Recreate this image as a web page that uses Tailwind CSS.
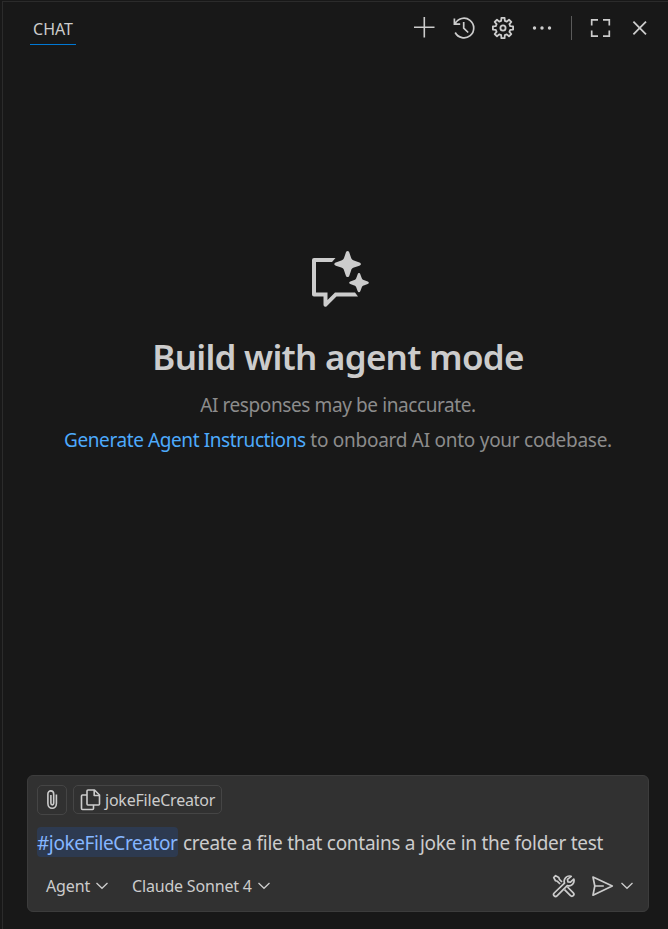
<!DOCTYPE html>
<html lang="en">
<head>
<meta charset="utf-8">
<title>Chat</title>
<script src="https://cdn.jsdelivr.net/npm/@tailwindcss/browser@4"></script>
</head>
<body class="bg-[#181818]">
<main class="flex h-[929px] w-[668px] flex-col overflow-hidden bg-[#181818] pt-px font-['Noto_Sans','Open_Sans',sans-serif] text-[#cccccc]">
  <div class="ml-[2px] flex flex-1 flex-col border-t border-l border-[#2b2b2b]">
    <header class="flex h-[54px] items-start pr-4 pl-[27px]">
      <div class="mt-[14px] flex h-[29px] w-[46px] justify-center border-b border-[#0078d4] text-[16px] leading-[26px] whitespace-nowrap"><span>CHAT</span></div>
      <div class="mt-[14px] ml-auto flex items-center">
        <svg class="size-6" viewBox="412 16 24 24" fill="none" stroke="currentColor" stroke-width="1.6"><path d="M424.3 17v20.5M414 27.3h20.5"/></svg>
        <svg class="ml-4 size-6" viewBox="452 16 24 24" fill="none" stroke="currentColor" stroke-width="1.7"><path d="M454.4 18.500v5.700h5.800M455.100 23.800a9.800 9.800 0 1 1 .100 8.700M463.700 22v6.200l4.500 4.300"/></svg>
        <svg class="ml-[15px] size-6" viewBox="-12 -12 24 24" fill="none" stroke="currentColor" stroke-width="1.8" stroke-linejoin="round"><path d="M-1.8-7.2L-1.6-10.1H1.6L1.8-7.2L3.8-6.4L6-8.3L8.3-6L6.4-3.8L7.2-1.8L10.1-1.6V1.6L7.2 1.8L6.4 3.8L8.3 6L6 8.3L3.8 6.4L1.8 7.2L1.6 10.1H-1.6L-1.8 7.2L-3.8 6.4L-6 8.3L-8.3 6L-6.4 3.8L-7.2 1.8L-10.1 1.6V-1.6L-7.2-1.8L-6.4-3.8L-8.3-6L-6-8.3L-3.8-6.4Z"/><circle r="2.6"/></svg>
        <svg class="ml-[15px] size-6" viewBox="530 16 24 24" fill="currentColor"><circle cx="534.5" cy="28" r="1.7"/><circle cx="542" cy="28" r="1.7"/><circle cx="549.5" cy="28" r="1.7"/></svg>
        <div class="ml-[17px] h-6 w-px bg-[#5a5a5a]"></div>
        <svg class="ml-4 size-6" viewBox="588 16 24 24" fill="none" stroke="currentColor" stroke-width="1.7"><path d="M598 19.8h-6.3v5.700M603 19.8h6.3v5.700M598 36.2h-6.3v-5.700M603 36.2h6.3v-5.700"/></svg>
        <svg class="ml-4 size-6" viewBox="628 16 24 24" fill="none" stroke="currentColor" stroke-width="1.8"><path d="M633.4 21.700l12.600 12.600M646 21.700l-12.600 12.600"/></svg>
      </div>
    </header>
    <section class="flex flex-1 flex-col items-center pt-[190px] pl-[5px]">
      <svg class="h-[64px] w-[64px]" viewBox="306 246 64 64" fill="currentColor"><path d="M312 260a2 2 0 0 1 2-2h21.500l-3.500 4h-16v30.500h11.500v7.500l7.500-7.500h20l3 4h-21.500l-9.300 9.300a2 2 0 0 1-3.700-1.300v-8h-9.500a2 2 0 0 1-2-2z"/><path d="M347.6 251c1 0 1.5.8 1.8 1.8l1.7 5c.5 1.5 1.3 2.3 2.8 2.8l5.5 1.900c2 .7 2 2.500 0 3.200l-5.500 1.900c-1.500.5-2.300 1.300-2.800 2.800l-1.700 5c-.7 2.200-2.900 2.200-3.600 0l-1.700-5c-.5-1.500-1.300-2.300-2.800-2.800l-5.500-1.900c-2-.7-2-2.500 0-3.200l5.500-1.900c1.500-.5 2.300-1.300 2.800-2.800l1.700-5c.3-1 .8-1.800 1.800-1.800z"/><path d="M359 273c.8 0 1.100.6 1.400 1.400l1.300 3.700c.4 1.100.9 1.600 2 2l4 1.400c1.500.5 1.500 2 0 2.500l-4 1.400c-1.100.4-1.600.9-2 2l-1.300 3.700c-.5 1.600-2.300 1.600-2.800 0l-1.300-3.700c-.4-1.100-.9-1.600-2-2l-4-1.400c-1.500-.5-1.500-2 0-2.500l4-1.400c1.100-.4 1.600-.9 2-2l1.300-3.700c.3-.8.600-1.400 1.400-1.400z"/></svg>
      <h1 class="mt-[23px] text-[35px] leading-[48px] font-semibold tracking-[-0.74px] whitespace-nowrap">Build with agent mode</h1>
      <p class="mt-[7px] text-[19px] leading-[35px] tracking-[-0.4px] whitespace-nowrap text-[#8c8c8c]">AI responses may be inaccurate.</p>
      <p class="text-[19px] leading-[35px] tracking-[-0.27px] whitespace-nowrap text-[#8c8c8c]"><a class="tracking-[-0.41px] text-[#4daafc]">Generate Agent Instructions</a> to onboard AI onto your codebase.</p>
    </section>
    <section class="mr-[19px] mb-[17px] ml-6 flex h-[137px] flex-col rounded-[6px] border border-[#3c3c3c] bg-[#313131] px-[9px] pt-[9px]">
      <div class="flex gap-[6px]">
        <div class="flex size-[30px] items-center justify-center rounded-[5px] border border-[#454545]"><svg class="h-[22px] w-4" viewBox="44 790 16 22" fill="none" stroke="currentColor" stroke-width="1.6"><path d="M56.400 795.500v9a4.200 4.700 0 0 1-8.500 0V795a2.900 3.100 0 0 1 5.800 0v9.300a1.400 1.600 0 0 1-2.800 0V796"/></svg></div>
        <div class="flex h-[29px] w-[149px] items-center rounded-[5px] border border-[#454545] pl-[4px] text-[16px]"><svg class="size-6 shrink-0" viewBox="78 788 24 24" fill="none" stroke="currentColor" stroke-width="1.6" stroke-linejoin="round"><path d="M88 790h6.500l5 5v9a1 1 0 0 1-1 1h-10.500a1 1 0 0 1-1-1v-13a1 1 0 0 1 1-1z"/><path d="M94.200 790v5.500h5.300M87 795h-4.500a1 1 0 0 0-1 1v12.500a1 1 0 0 0 1 1h10a1 1 0 0 0 1-1v-3.500"/></svg><span class="ml-[3px] tracking-[-0.22px]">jokeFileCreator</span></div>
      </div>
      <div class="mt-[12px] flex h-[30px] items-center text-[19px] whitespace-pre"><span class="flex h-[30px] w-[141px] items-center rounded-[4px] bg-[#2d3a50] pt-[2px] tracking-[-0.4px] text-[#85b6ff]">#jokeFileCreator</span><span class="ml-[5px] pt-[2px] tracking-[-0.28px]">create a file that contains a joke in the folder test</span></div>
      <div class="mt-[15px] flex h-7 items-center pl-[9px] text-[16px] whitespace-nowrap">
        <span class="w-[48px] tracking-[-0.1px]">Agent</span>
        <svg class="h-3 w-4" viewBox="94 881 16 12" fill="none" stroke="currentColor" stroke-width="1.3"><path d="M96.500 884l5.500 5.300 5.500-5.300"/></svg>
        <span class="ml-[22px] w-[124px] tracking-[-0.18px]">Claude Sonnet 4</span>
        <svg class="h-3 w-4" viewBox="94 881 16 12" fill="none" stroke="currentColor" stroke-width="1.3"><path d="M96.500 884l5.500 5.300 5.500-5.300"/></svg>
        <svg class="ml-auto size-6" viewBox="552 874.500 24 24" fill="none" stroke="currentColor" stroke-width="1.700" stroke-linejoin="round"><path d="M571.200 876.900a5.200 5.200 0 0 0-6.700 6.700l-10.300 9.900a1.900 1.900 0 0 0 2.800 2.800l10.200-10.200a5.200 5.200 0 0 0 6.600-6.500l-3.300 3-2.600-.3-.4-2.500z"/><path d="M562 882.500l-2.600-2.700-.6-1.900-3.200-1.700-1.900 1.900 1.800 3.100 1.900.6 2.700 2.700M567.500 887.500l5.800 5.900a1.900 1.900 0 0 1-2.800 2.800l-6-6"/></svg>
        <svg class="ml-[14px] size-6" viewBox="590 874 24 24" fill="none" stroke="currentColor" stroke-width="1.700" stroke-linejoin="round"><path d="M593 877l19.300 9-19.300 9.200 1.800-9.200zM594.800 886h9"/></svg>
        <svg class="mr-[4px] ml-[5px] h-3 w-4" viewBox="94 881 16 12" fill="none" stroke="currentColor" stroke-width="1.3"><path d="M96.500 884l5.500 5.300 5.500-5.300"/></svg>
      </div>
    </section>
  </div>
</main>
</body>
</html>
